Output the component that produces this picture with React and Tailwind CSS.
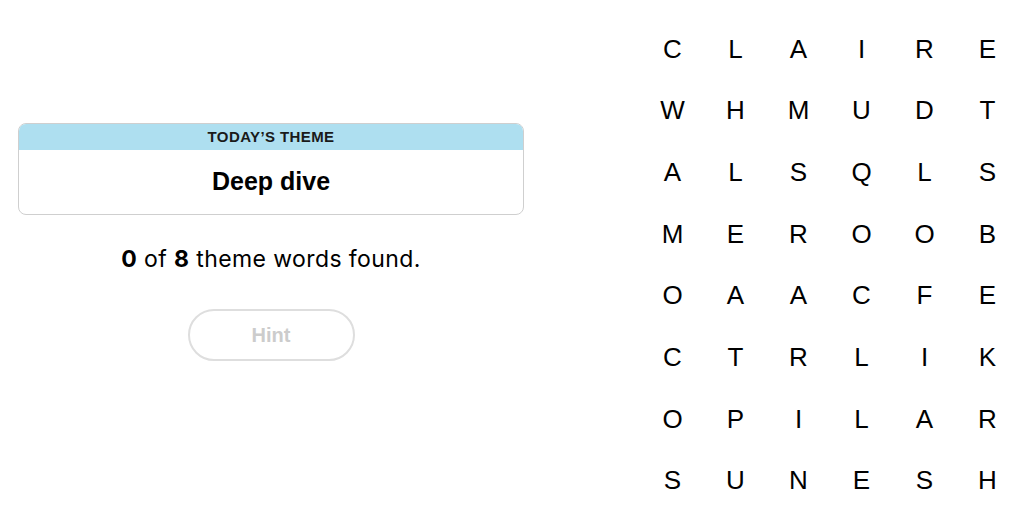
import React from 'react';

const rows = [
  'CLAIRE',
  'WHMUDT',
  'ALSQLS',
  'MEROOB',
  'OAACFE',
  'CTRLIK',
  'OPILAR',
  'SUNESH',
];

const App = () => {
  return (
    <div className="w-[1024px] h-[529px] bg-white flex font-['Liberation_Sans',Arial,sans-serif] text-black overflow-hidden">
      {/* theme + progress */}
      <div className="ml-[18px] w-[506px] flex flex-col items-center">
        <div className="mt-[123px] w-full rounded-lg border border-[#cfcfcf] overflow-hidden">
          <div className="h-[26px] bg-[#aedff0] flex items-center justify-center text-[15px] font-bold tracking-[0.4px] text-[#1a1a1a]">
            TODAY’S THEME
          </div>
          <div className="h-[64px] flex items-center justify-center text-[25px] font-bold">
            Deep dive
          </div>
        </div>
        <p className="mt-[30px] text-[23px] leading-[28px] font-['Inter',sans-serif] tracking-[0.4px]">
          <span className="font-bold">0</span> of <span className="font-bold">8</span> theme words found.
        </p>
        <button
          className="mt-[36px] w-[167px] h-[52px] rounded-full border-2 border-[#dedede] text-[20px] font-bold text-[#cccccc]"
          disabled
        >
          Hint
        </button>
      </div>

      {/* letter grid */}
      <div className="ml-[117px] mt-[18px] grid grid-cols-6 w-[378px] h-[493px]">
        {rows.map((row, r) =>
          row.split('').map((ch, c) => (
            <div key={r + '-' + c} className="flex items-center justify-center text-[26px] leading-none">
              {ch}
            </div>
          ))
        )}
      </div>
    </div>
  );
};

export default App;
